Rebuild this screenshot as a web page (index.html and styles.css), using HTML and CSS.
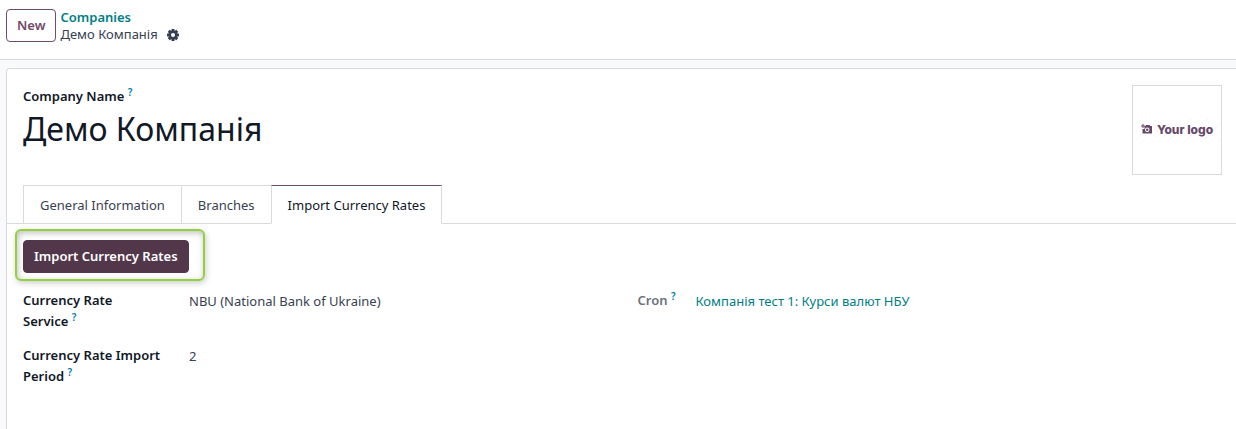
FILE: index.html
```html
<!DOCTYPE html>
<html lang="uk">
<head>
    <meta charset="UTF-8">
    <meta name="viewport" content="width=device-width, initial-scale=1.0">
    <title>Демо Компанія</title>
    <link rel="stylesheet" href="styles.css">
</head>
<body>
    <header class="control-panel">
        <button type="button" class="btn btn-outline">New</button>
        <div class="breadcrumb">
            <a href="#" class="breadcrumb-link">Companies</a>
            <div class="breadcrumb-current">
                <span>Демо Компанія</span>
                <button type="button" class="btn-cog" aria-label="Actions">
                    <svg viewBox="0 0 24 24" width="12" height="12">
                        <g fill="currentColor">
                            <rect x="9" y="0" width="6" height="24" rx="1"/>
                            <rect x="9" y="0" width="6" height="24" rx="1" transform="rotate(45 12 12)"/>
                            <rect x="9" y="0" width="6" height="24" rx="1" transform="rotate(90 12 12)"/>
                            <rect x="9" y="0" width="6" height="24" rx="1" transform="rotate(135 12 12)"/>
                            <circle cx="12" cy="12" r="9"/>
                        </g>
                        <circle cx="12" cy="12" r="4" fill="#fff"/>
                    </svg>
                </button>
            </div>
        </div>
    </header>

    <main class="sheet">
        <div class="sheet-head">
            <div class="title">
                <label for="companyName">Company Name&nbsp;<sup>?</sup></label>
                <input type="text" id="companyName" class="title-input" value="Демо Компанія">
            </div>
            <button type="button" class="logo">
                <svg viewBox="0 0 22 20" width="11" height="10">
                    <path fill="currentColor" d="M3 0h2v3h3v2H5v3H3V5H0V3h3z"/>
                    <path fill="currentColor" fill-rule="evenodd" d="M10 2h7l1 2h4v15H3V10h4V4h2zM12.500 7a4.500 4.500 0 1 0 0 9a4.500 4.500 0 1 0 0-9zM12.500 9a2.500 2.500 0 1 1 0 5a2.500 2.500 0 1 1 0-5z"/>
                </svg>
                <span>Your logo</span>
            </button>
        </div>

        <nav class="tabs">
            <a href="#" class="tab">General Information</a>
            <a href="#" class="tab">Branches</a>
            <a href="#" class="tab active">Import Currency Rates</a>
        </nav>

        <section class="tab-content">
            <div class="highlight">
                <button type="button" class="btn btn-primary">Import Currency Rates</button>
            </div>
            <div class="groups">
                <div class="group">
                    <label for="rateService">Currency Rate Service&nbsp;<sup>?</sup></label>
                    <select id="rateService" class="field">
                        <option>NBU (National Bank of Ukraine)</option>
                    </select>
                    <label for="ratePeriod">Currency Rate Import Period&nbsp;<sup>?</sup></label>
                    <input type="text" id="ratePeriod" class="field" value="2">
                </div>
                <div class="group group-cron">
                    <label for="cron" class="muted">Cron&nbsp;<sup>?</sup></label>
                    <a href="#" id="cron" class="field link">Компанія тест 1: Курси валют НБУ</a>
                </div>
            </div>
        </section>
    </main>
</body>
</html>
```

FILE: styles.css
```css
* {
    box-sizing: border-box;
}
body {
    margin: 0;
    min-height: 100vh;
    display: flex;
    flex-direction: column;
    background-color: #f9fafb;
    color: #374151;
    font-family: "Segoe UI", "Noto Sans", sans-serif;
    font-size: 13px;
    line-height: 21px;
    overflow-x: hidden;
}
a {
    color: #017e84;
    text-decoration: none;
}
button, input, select {
    font: inherit;
    color: inherit;
}
button {
    cursor: pointer;
}
label {
    color: #111827;
    font-weight: 600;
}
sup {
    color: #0180a5;
    font-size: 10px;
    font-weight: 600;
    line-height: 0;
    vertical-align: 5px;
}

/* top bar */
.control-panel {
    display: flex;
    align-items: flex-start;
    gap: 4px;
    height: 60px;
    padding: 9px 6px;
    background-color: #fff;
    border-bottom: 1px solid #d8dadd;
}
.btn {
    height: 33px;
    padding: 0 10px;
    border: 1px solid #714b67;
    border-radius: 4px;
    font-weight: 600;
    white-space: nowrap;
}
.btn-outline {
    background-color: #fff;
    color: #714b67;
}
.btn-primary {
    background-color: #52374b;
    border-color: #52374b;
    color: #fff;
}
.breadcrumb {
    line-height: 17px;
}
.breadcrumb-link {
    display: block;
    font-weight: 600;
}
.breadcrumb-current {
    display: flex;
    align-items: center;
    gap: 9px;
}
.btn-cog {
    display: flex;
    padding: 0;
    border: none;
    background: none;
}

/* form sheet */
.sheet {
    flex: 1;
    margin: 8px 0 0 6px;
    padding-top: 16px;
    background-color: #fff;
    border: 1px solid #d8dadd;
    border-width: 1px 0 0 1px;
    border-radius: 4px 0 0 0;
}
.sheet-head {
    display: flex;
    justify-content: space-between;
    padding: 0 14px 10px 16px;
}
.title {
    flex: 1;
}
.title label {
    display: block;
    line-height: 23px;
}
.title-input {
    display: block;
    width: 100%;
    height: 40px;
    padding: 0;
    border: none;
    background: none;
    color: #111827;
    font-size: 32px;
}
.logo {
    display: flex;
    align-items: center;
    justify-content: center;
    gap: 5px;
    width: 90px;
    height: 90px;
    padding: 0 0 2px;
    border: 1px solid #d8dadd;
    background: repeating-linear-gradient(135deg, #fff 0 5px, #faf9fa 5px 6px) center / 100% 24px no-repeat #fff;
    color: #66486a;
    font-family: Inter, sans-serif;
    font-size: 12px;
    font-weight: 800;
    white-space: nowrap;
}

.tabs {
    display: flex;
    padding-left: 16px;
    border-bottom: 1px solid #d8dadd;
}
.tab {
    margin-bottom: -1px;
    padding: 9px 16px 7px;
    border: 1px solid #d8dadd;
    border-right-width: 0;
    color: #374151;
}
.tab.active {
    border-right-width: 1px;
    border-top-color: #714b67;
    border-bottom-color: #fff;
    color: #111827;
}

.tab-content {
    padding: 16px;
}
.highlight {
    position: relative;
    width: fit-content;
}
/* marker frame around the button */
.highlight::before {
    content: "";
    position: absolute;
    inset: -11px -16px -8px -8px;
    border: 2px solid #92d03f;
    border-radius: 6px;
    box-shadow: 1px 2px 6px rgba(0, 0, 0, 0.2), inset 1px 2px 6px rgba(0, 0, 0, 0.25);
    pointer-events: none;
}
.highlight .btn {
    display: block;
}
.groups {
    display: grid;
    grid-template-columns: 1fr 1fr;
    gap: 32px;
    padding-top: 17px;
}
.group {
    display: grid;
    grid-template-columns: 140px 1fr;
    align-content: start;
    align-items: start;
    gap: 13px 26px;
}
.group-cron {
    grid-template-columns: auto 1fr;
    column-gap: 20px;
}
.field {
    height: 22px;
    padding: 0;
    border: none;
    background: none;
    line-height: 22px;
    appearance: none;
}
.muted {
    color: #6b7280;
}
.link {
    color: #017e84;
}
```
